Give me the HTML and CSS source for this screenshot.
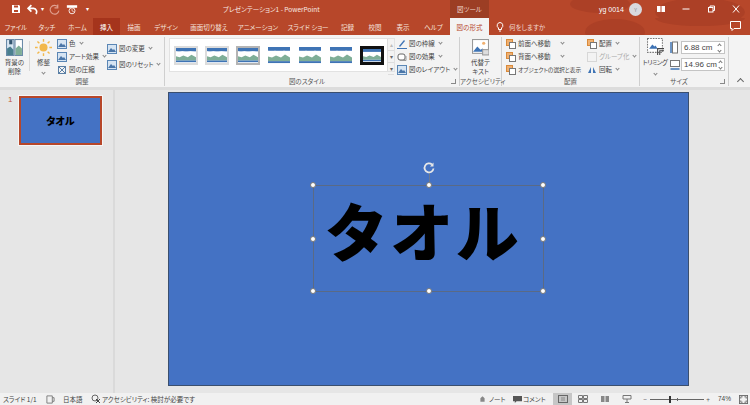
FILE: index.html
```html
<!DOCTYPE html>
<html lang="ja">
<head>
<meta charset="utf-8">
<title>PowerPoint</title>
<link rel="stylesheet" href="styles.css">
</head>
<body>
<svg class="defs" width="0" height="0">
  <symbol id="pic" viewBox="0 0 22 18" preserveAspectRatio="none">
    <rect width="22" height="18" fill="#fff"/>
    <rect width="22" height="4" fill="#3f74b5"/>
    <path d="M0 4l3 1 4-1 4 1 5-1 6 1v7l-5-3-4 2-5-2-4 2-4-1z" fill="#fff"/>
    <path d="M0 10l4 1 4-2 5 2 4-3 5 3v4H0z" fill="#7fae97"/>
    <rect y="15" width="22" height="2" fill="#3f74b5"/>
  </symbol>
  <symbol id="small" viewBox="0 0 10 10">
    <rect x=".5" y=".5" width="9" height="9" fill="#d6e4f2" stroke="#5a86b5"/>
    <path d="M1 8l3-4 2 2 1-1 2 3z" fill="#4a76a8"/>
  </symbol>
  <symbol id="stack" viewBox="0 0 10 10">
    <rect x=".5" y=".5" width="6" height="6" fill="#f0b070" stroke="#d98a3a"/>
    <rect x="3.500" y="3.500" width="6" height="6" fill="#fff" stroke="#777"/>
  </symbol>
</svg>

<div class="app">
  <header class="titlebar">
    <svg class="blobs" viewBox="0 0 750 18" preserveAspectRatio="none" aria-hidden="true">
      <ellipse cx="600" cy="4" rx="30" ry="9" fill="#ac4026"/>
      <ellipse cx="700" cy="12" rx="45" ry="14" fill="#ac4026"/>
    </svg>
    <div class="qat">
      <svg class="q save" viewBox="0 0 10 10"><path d="M1 1h7l1 1v7H1z" fill="#fff"/><rect x="3" y="1.500" width="4" height="2" fill="#b7472a"/><rect x="3" y="6" width="4" height="2" fill="#b7472a"/></svg>
      <svg class="q" viewBox="0 0 10 10"><path d="M4 1L1 4l3 3M1 4h5a3 3 0 0 1 2 5" fill="none" stroke="#fff" stroke-width="1.500"/></svg>
      <span class="qcaret">▾</span>
      <svg class="q dim" viewBox="0 0 10 10"><path d="M8 2.500A4 4 0 1 0 9 6M8 .5v3H5" fill="none" stroke="#e0a090" stroke-width="1"/></svg>
      <svg class="q wide" viewBox="0 0 14 12"><rect x="1" y="1" width="12" height="3" fill="#fff"/><circle cx="7" cy="7.500" r="3.500" fill="none" stroke="#fff"/><path d="M7 5.500v2l2 1" stroke="#fff" fill="none" stroke-width=".8"/></svg>
      <span class="qcaret small">▾</span>
    </div>
    <div class="doc-title">プレゼンテーション1 - PowerPoint</div>
    <div class="ctx">図ツール</div>
    <div class="account">
      <span class="user">yg 0014</span>
      <span class="avatar">Y</span>
      <svg class="win first" viewBox="0 0 10 8"><rect x="1" y="1" width="8" height="6" fill="#fff"/><rect x="4.500" y="1" width="1" height="6" fill="#b7472a"/></svg>
      <svg class="win" viewBox="0 0 10 8"><path d="M1.500 4h7" stroke="#fff"/></svg>
      <svg class="win" viewBox="0 0 10 8"><rect x="2.500" y="2.500" width="4.500" height="4.500" fill="none" stroke="#fff"/><path d="M4 2.500V1h4.500v4.500H7" fill="none" stroke="#fff"/></svg>
      <svg class="win" viewBox="0 0 10 8"><path d="M2 .5l6 7M8 .5l-6 7" stroke="#fff"/></svg>
    </div>
  </header>

  <nav class="tabs">
    <svg class="blobs" viewBox="0 0 750 17" preserveAspectRatio="none" aria-hidden="true">
      <ellipse cx="615" cy="14" rx="30" ry="13" fill="#ac4026"/>
      <ellipse cx="700" cy="0" rx="45" ry="8" fill="#ac4026"/>
    </svg>
    <span class="tab t1">ファイル</span>
    <span class="tab t2">タッチ</span>
    <span class="tab t3">ホーム</span>
    <span class="tab t4 on">挿入</span>
    <span class="tab t5">描画</span>
    <span class="tab t6">デザイン</span>
    <span class="tab t7">画面切り替え</span>
    <span class="tab t8">アニメーション</span>
    <span class="tab t9">スライド ショー</span>
    <span class="tab t10">記録</span>
    <span class="tab t11">校閲</span>
    <span class="tab t12">表示</span>
    <span class="tab t13">ヘルプ</span>
    <span class="tab t14 active">図の形式</span>
    <svg class="bulb" viewBox="0 0 8 10"><path d="M4 .5a3 3 0 0 0-1.500 5.500v1.500h3V6A3 3 0 0 0 4 .5zM3 9h2" fill="none" stroke="#fff"/></svg>
    <span class="tab tell">何をしますか</span>
    <svg class="comment" viewBox="0 0 11 10"><path d="M.5.500h10v7H4l-2 2v-2H.5z" fill="none" stroke="#fff"/></svg>
  </nav>

  <section class="ribbon">
    <div class="group g-adjust">
      <div class="gbody">
        <div class="bigbtn b-remove">
          <svg class="bigic" viewBox="0 0 16 16"><rect x=".5" y=".5" width="7" height="15" fill="#d8e6f2" stroke="#6a8aa8"/><rect x="8.500" y=".5" width="7" height="15" fill="#fff" stroke="#6a8aa8"/><path d="M1 15V9l3-2 3 3v5z" fill="#4a7f8f"/><path d="M9 15V9l3-3 3 3v6z" fill="#7fae97"/><path d="M3 1h3v4H3z" fill="#33556f"/></svg>
          <span>背景の<br>削除</span>
        </div>
        <i class="vsep"></i>
        <div class="bigbtn b-fix">
          <svg class="sun" viewBox="0 0 16 16"><circle cx="8" cy="8" r="3.800" fill="#f2b84b"/><g stroke="#f2b84b" stroke-width="1.300"><path d="M8 0v2.500M8 13.500V16M0 8h2.500M13.500 8H16M2.300 2.300l1.800 1.800M11.900 11.900l1.800 1.800M2.300 13.700l1.800-1.800M11.900 4.100l1.800-1.800"/></g></svg>
          <span>修整</span>
          <i class="caret"></i>
        </div>
        <div class="col c-color">
          <div class="row"><svg class="ic"><use href="#small"/></svg>色<i class="caret"></i></div>
          <div class="row"><svg class="ic"><use href="#small"/></svg>アート効果<i class="caret"></i></div>
          <div class="row"><svg class="ic" viewBox="0 0 10 10"><path d="M1 1l8 8M9 1L1 9" stroke="#5a7fa5"/><rect x="1.500" y="1.500" width="7" height="7" fill="none" stroke="#5a7fa5"/></svg>図の圧縮</div>
        </div>
        <div class="col c-change">
          <div class="row"><svg class="ic"><use href="#small"/></svg>図の変更<i class="caret"></i></div>
          <div class="row"><svg class="ic"><use href="#small"/></svg>図のリセット<i class="caret"></i></div>
        </div>
      </div>
      <div class="glabel">調整</div>
    </div>

    <div class="group g-style">
      <div class="gbody">
        <div class="gallery">
          <div class="thumbs">
            <svg class="thumb framed"><use href="#pic"/></svg>
            <svg class="thumb framed"><use href="#pic"/></svg>
            <svg class="thumb selected"><use href="#pic"/></svg>
            <svg class="thumb"><use href="#pic"/></svg>
            <svg class="thumb"><use href="#pic"/></svg>
            <svg class="thumb"><use href="#pic"/></svg>
            <svg class="thumb black"><use href="#pic"/></svg>
          </div>
          <div class="scroller"><span>▴</span><span>▾</span><span>▾</span></div>
        </div>
        <div class="col c-border">
          <div class="row"><svg class="ic" viewBox="0 0 10 10"><path d="M2 7l5-6 1 1-5 6z" fill="#3f74b5"/><path d="M0 9.500h10" stroke="#3f74b5"/></svg>図の枠線<i class="caret"></i></div>
          <div class="row"><svg class="ic" viewBox="0 0 10 10"><rect x="1" y="2" width="7" height="6" rx="2" fill="#fff" stroke="#666"/><path d="M3 8.500h6V4" fill="none" stroke="#999"/></svg>図の効果<i class="caret"></i></div>
          <div class="row"><svg class="ic"><use href="#small"/></svg>図のレイアウト<i class="caret"></i></div>
        </div>
      </div>
      <div class="glabel shifted">図のスタイル</div>
      <i class="launcher"></i>
    </div>

    <div class="group g-alt">
      <div class="gbody">
        <div class="bigbtn b-alt">
          <svg class="bigic" viewBox="0 0 16 16"><rect x=".5" y=".5" width="15" height="13" fill="#fff" stroke="#999"/><path d="M1 12l4-5 3 3 2-1 3 3z" fill="#3f74b5"/><circle cx="11" cy="4" r="1.500" fill="#f0b070"/><rect x="10" y="10" width="6" height="5" fill="#ddd" stroke="#999"/></svg>
          <span>代替テ<br>キスト</span>
        </div>
      </div>
      <div class="glabel">アクセシビリティ</div>
    </div>

    <div class="group g-arrange">
      <div class="gbody">
        <div class="col c-front">
          <div class="row"><svg class="ic"><use href="#stack"/></svg>前面へ移動<i class="caret wide"></i></div>
          <div class="row"><svg class="ic"><use href="#stack"/></svg>背面へ移動<i class="caret wide"></i></div>
          <div class="row narrow"><svg class="ic"><use href="#stack"/></svg>オブジェクトの選択と表示</div>
        </div>
        <div class="col c-align">
          <div class="row"><svg class="ic"><use href="#stack"/></svg>配置<i class="caret"></i></div>
          <div class="row off"><svg class="ic" viewBox="0 0 10 10"><rect x=".5" y=".5" width="9" height="9" fill="none" stroke="#bbb" stroke-dasharray="1 1"/></svg>グループ化<i class="caret"></i></div>
          <div class="row"><svg class="ic" viewBox="0 0 10 10"><path d="M1 8l3-6v6zM6 8V2l3 6z" fill="#3f74b5"/></svg>回転<i class="caret"></i></div>
        </div>
      </div>
      <div class="glabel">配置</div>
    </div>

    <div class="group g-size">
      <div class="gbody">
        <div class="bigbtn b-crop">
          <svg class="bigic" viewBox="0 0 16 16"><rect x=".5" y=".5" width="14" height="13" fill="#fff" stroke="#777" stroke-dasharray="1.500 1"/><path d="M2 10l3-4 2 2 1-1 2 3z" fill="#3f74b5"/><path d="M10 16v-6h6" fill="none" stroke="#444"/><path d="M12 16v-4h4" fill="none" stroke="#444"/></svg>
          <span class="crop-label">トリミング</span>
          <i class="caret"></i>
        </div>
        <div class="col c-dims">
          <div class="dim-row">
            <svg class="dim-ic" viewBox="0 0 10 12"><rect x="2.500" y=".5" width="5" height="11" fill="#fff" stroke="#777"/><path d="M1 .5v11" stroke="#3f74b5" stroke-width="1.500"/></svg>
            <div class="spin">6.88 cm<span class="arrows"><i class="up"></i><i class="dn"></i></span></div>
          </div>
          <div class="dim-row">
            <svg class="dim-ic" viewBox="0 0 10 12"><rect x=".5" y="2" width="9" height="6" fill="#fff" stroke="#777"/><path d="M.5 10.500h9" stroke="#3f74b5" stroke-width="1.500"/></svg>
            <div class="spin">14.96 cm<span class="arrows"><i class="up"></i><i class="dn"></i></span></div>
          </div>
        </div>
      </div>
      <div class="glabel shifted">サイズ</div>
      <i class="launcher"></i>
    </div>
    <i class="collapse"></i>
  </section>
  <div class="ribbon-gap"></div>

  <main class="main">
    <aside class="panel">
      <span class="num">1</span>
      <div class="mini"><span>タオル</span></div>
    </aside>
    <div class="stage">
      <div class="slide">
        <div class="selection">
          <span class="big-text">タオル</span>
          <i class="stem"></i>
          <svg class="rotate" viewBox="0 0 12 12"><path d="M10.500 6.500a4.500 4.500 0 1 1-1.500-4" fill="none" stroke="#e8e8e8" stroke-width="1.800"/><path d="M9.500 0v4h-3.500z" fill="#e8e8e8" transform="translate(1 .5)"/></svg>
          <i class="h tl"></i><i class="h tc"></i><i class="h tr"></i>
          <i class="h ml"></i><i class="h mr"></i>
          <i class="h bl"></i><i class="h bc"></i><i class="h br"></i>
        </div>
      </div>
    </div>
  </main>

  <footer class="status">
    <div class="st-left">
      <span class="s1">スライド 1/1</span>
      <svg class="s2" viewBox="0 0 10 10"><path d="M1 1h6v8H1zM7 3h2v4H7" fill="none" stroke="#777"/></svg>
      <span class="s3">日本語</span>
      <svg class="s4" viewBox="0 0 10 10"><circle cx="4" cy="4" r="3" fill="none" stroke="#666"/><path d="M5 5l4 4M9 5L5 9" stroke="#444"/></svg>
      <span>アクセシビリティ: 検討が必要です</span>
    </div>
    <div class="st-right">
      <svg class="s5" viewBox="0 0 10 10"><path d="M2 9V4l3-3 3 3v5z" fill="#888"/></svg>
      <span class="s6">ノート</span>
      <svg class="s7" viewBox="0 0 10 10"><path d="M0 1h10v6H4L2 9V7H0z" fill="#555"/></svg>
      <span class="s8">コメント</span>
      <span class="view on"><svg viewBox="0 0 10 8"><rect x=".5" y=".5" width="9" height="7" fill="none" stroke="#666"/><path d="M3 3h4M3 5h4" stroke="#888"/></svg></span>
      <span class="view"><svg viewBox="0 0 10 8"><path d="M.5.5h4v3h-4zM5.500.5h4v3h-4zM.5 4.500h4v3h-4zM5.500 4.500h4v3h-4z" fill="none" stroke="#777"/></svg></span>
      <span class="view"><svg viewBox="0 0 10 8"><path d="M1 1h3.500v6H1zM5.500 1H9v6H5.500z" fill="#888"/></svg></span>
      <span class="view"><svg viewBox="0 0 10 8"><path d="M1 .5h8v3.500H1zM5 4v3M3 7.500h4" fill="none" stroke="#777"/></svg></span>
      <span class="zm minus">−</span>
      <span class="slider"><i class="tick"></i><i class="thumbz"></i></span>
      <span class="zm plus">+</span>
      <span class="pct">74%</span>
      <svg class="fit" viewBox="0 0 10 10"><rect x=".5" y=".5" width="9" height="9" fill="none" stroke="#666"/><path d="M2 4V2h2M8 4V2H6M2 6v2h2M8 6v2H6" fill="none" stroke="#666"/></svg>
    </div>
  </footer>
</div>
</body>
</html>
```

FILE: styles.css
```css
* { box-sizing: border-box; }
html, body { margin: 0; padding: 0; }
body {
  width: 750px;
  height: 405px;
  overflow: hidden;
  font-family: "Noto Sans CJK JP", "Noto Sans", sans-serif;
  font-feature-settings: "palt";
  color: #444;
}
.defs { position: absolute; }
.app { width: 750px; height: 405px; display: flex; flex-direction: column; background: #e6e6e6; }

/* title bar */
.titlebar {
  position: relative;
  height: 18px;
  background: #b7472a;
  color: #fff;
  display: flex;
  align-items: center;
  font-size: 7px;
  flex: none;
}
.blobs { position: absolute; inset: 0; width: 100%; height: 100%; }
.qat { position: relative; display: flex; align-items: center; width: 222px; padding-left: 11px; }
.q { width: 11px; height: 11px; margin-right: 6px; }
.q.save { width: 10px; height: 10px; margin-right: 6px; }
.q.dim { margin-left: 5px; margin-right: 6px; }
.q.wide { width: 12px; height: 11px; margin-right: 8px; }
.qcaret { font-size: 6px; line-height: 1; margin-left: -3px; }
.qcaret.small { margin-left: 0; }
.doc-title { position: relative; width: 228px; white-space: nowrap; padding-left: 1px; font-size: 6.500px; color: #f8e8e2; }
.ctx {
  position: relative;
  width: 39px;
  height: 18px;
  background: #9c3e24;
  text-align: center;
  line-height: 18px;
  font-size: 6.500px;
  color: #f0d8d0;
}
.account { position: relative; display: flex; align-items: center; flex: 1; padding-left: 110px; }
.user { font-size: 7px; width: 30px; white-space: nowrap; font-family: "Liberation Sans", sans-serif; }
.avatar {
  width: 13px; height: 13px;
  border-radius: 50%;
  background: #d9d9de; color: #8a8a90;
  font-size: 5px; line-height: 13px; text-align: center;
}
.win { width: 10px; height: 8px; margin-left: 15px; }
.win.first { margin-left: 14px; }

/* tabs */
.tabs {
  position: relative;
  height: 17px;
  flex: none;
  background: #b7472a;
  color: #f6e4de;
  display: flex;
  align-items: stretch;
  font-size: 6.500px;
}
.tab { position: relative; display: flex; align-items: center; justify-content: center; white-space: nowrap; }
.t1 { width: 32px; }
.t2 { width: 30px; }
.t3 { width: 31px; }
.t4 { width: 27px; }
.t4.on { background: #a5341c; color: #fff; }
.t5 { width: 28px; }
.t6 { width: 36px; }
.t7 { width: 50px; }
.t8 { width: 48px; }
.t9 { width: 52px; }
.t10 { width: 27px; }
.t11 { width: 28px; }
.t12 { width: 28px; }
.t13 { width: 33px; }
.t14 { width: 39px; }
.tab.active { background: #f3f3f3; color: #b7472a; }
.bulb { position: relative; width: 8px; height: 10px; margin: 4px 0 0 7px; }
.tell { margin-left: 5px; color: #f2d8d0; }
.comment { position: absolute; right: 9px; top: 3px; width: 11px; height: 10px; }

/* ribbon */
.ribbon {
  position: relative;
  height: 52px;
  flex: none;
  background: #f3f3f3;
  display: flex;
  font-size: 6.500px;
  line-height: 9px;
}
.ribbon-gap { height: 3px; flex: none; background: #dcdcdc; }
.group { position: relative; display: flex; flex-direction: column; border-right: 1px solid #cfcfcf; margin: 2px 0 1px; flex: none; }
.gbody { flex: 1; display: flex; min-height: 0; }
.glabel { height: 10px; line-height: 10px; font-size: 6.500px; text-align: center; color: #555; white-space: nowrap; }
.glabel.shifted { padding-right: 10px; }
.launcher { position: absolute; right: 3px; bottom: 2px; width: 5px; height: 5px; border-right: 1px solid #888; border-bottom: 1px solid #888; }
.g-adjust { width: 165px; }
.g-style { width: 295px; }
.g-alt { width: 42px; }
.g-arrange { width: 138px; }
.g-size { width: 89px; }
.bigbtn { display: flex; flex-direction: column; align-items: center; text-align: center; white-space: nowrap; }
.bigic { width: 17px; height: 17px; display: block; }
.sun { width: 17px; height: 17px; display: block; }
.bigbtn span { display: block; }
.caret {
  display: inline-block;
  width: 3px;
  height: 3px;
  margin: -2px 0 0 4px;
  border-right: 1px solid #888;
  border-bottom: 1px solid #888;
  transform: rotate(45deg);
  flex: none;
}
.bigbtn .caret { margin: 2px 0 0; }
.caret.wide { margin-left: 10px; }
.vsep { width: 1px; height: 30px; margin: 4px 0 0; background: #d8d8d8; flex: none; }
.b-remove { width: 29px; padding-top: 2px; gap: 2px; }
.b-fix { width: 27px; padding-top: 2px; gap: 2px; }
.col { display: flex; flex-direction: column; }
.row { display: flex; align-items: center; height: 13px; white-space: nowrap; }
.row.off { color: #aaa; }
.row.narrow { font-size: 5.700px; }
.ic { width: 10px; height: 10px; margin-right: 2px; flex: none; }
.c-color { width: 50px; }
.c-change { padding-top: 5px; gap: 3px; }

.gallery {
  display: flex;
  margin: 1px 0 0 4px;
  width: 226px;
  height: 34px;
  background: #fff;
  border: 1px solid #e2e2e2;
}
.thumbs { display: flex; align-items: center; flex: 1; padding-left: 5px; gap: 9px; }
.thumb { width: 22px; height: 17px; flex: none; }
.thumb.framed { width: 20px; height: 15px; margin: 0 1px; outline: 2px solid #dcdcdc; }
.thumb.selected { width: 20px; height: 15px; margin: 0 1px; outline: 2px solid #b4b4b4; }
.thumb.black { outline: 3px solid #111; width: 18px; height: 13px; margin-left: 2px; }
.scroller { width: 7px; display: flex; flex-direction: column; background: #f3f3f3; border-left: 1px solid #ddd; }
.scroller span { flex: 1; font-size: 6px; line-height: 11px; text-align: center; color: #666; border-bottom: 1px solid #ddd; }
.scroller span:first-child { color: #bbb; }
.c-border { padding: 0 0 0 2px; }

.b-alt { width: 41px; padding-top: 2px; gap: 2px; }

.c-front { width: 85px; padding-left: 4px; }

.b-crop { width: 30px; padding-top: 1px; gap: 3px; }
.crop-label { letter-spacing: -.6px; }
.c-dims { gap: 4px; padding-top: 4px; }
.dim-row { display: flex; align-items: center; gap: 1px; }
.dim-ic { width: 10px; height: 13px; flex: none; }
.spin {
  width: 44px;
  height: 13px;
  background: #fff;
  border: 1px solid #c4c4c4;
  font-family: "Liberation Sans", sans-serif;
  font-size: 8px;
  line-height: 11px;
  padding-left: 2px;
  display: flex;
  justify-content: space-between;
  white-space: nowrap;
}
.arrows { display: flex; flex-direction: column; align-items: center; justify-content: center; gap: 2px; width: 9px; }
.arrows i { display: block; width: 3px; height: 3px; border-right: 1px solid #777; border-bottom: 1px solid #777; }
.arrows .up { transform: rotate(-135deg); }
.arrows .dn { transform: rotate(45deg); }
.collapse { position: absolute; right: 7px; bottom: 3px; width: 5px; height: 5px; border-right: 1px solid #666; border-bottom: 1px solid #666; transform: rotate(-135deg); }

/* main */
.main { flex: 1; display: flex; min-height: 0; background: #e6e6e6; }
.panel {
  position: relative;
  width: 115px;
  flex: none;
  border-right: 2px solid #dadada;
  padding: 6px 0 0 19px;
}
.num { position: absolute; left: 8px; top: 5px; font-size: 8px; line-height: 10px; color: #c0563a; font-family: "Liberation Sans", sans-serif; }
.mini {
  width: 83px;
  height: 49px;
  background: #4472c4;
  border: 2px solid #b7472a;
  outline: 1px solid #f5f5f5;
  display: flex;
  align-items: center;
  justify-content: center;
  font-size: 10px;
  font-weight: 900;
  color: #000;
}
.stage { flex: 1; padding: 2px 0 0 53px; }
.slide {
  width: 521px;
  height: 294px;
  background: #4472c4;
  border: 1px solid #3b4f6e;
  display: flex;
  align-items: center;
  justify-content: center;
}
.selection {
  position: relative;
  width: 231px;
  height: 107px;
  margin-bottom: 1px;
  padding: 0 11px 20px 0;
  border: 1px solid #5a6a85;
  display: flex;
  align-items: center;
  justify-content: center;
}
.big-text { font-size: 63px; font-feature-settings: normal; line-height: 1; font-weight: 900; color: #000; white-space: nowrap; letter-spacing: 2.500px; }
.h {
  position: absolute;
  width: 6px;
  height: 6px;
  background: #fff;
  border: 1px solid #777;
  border-radius: 50%;
}
.tl { left: -4px; top: -4px; }
.tc { left: calc(50% - 3px); top: -4px; }
.tr { right: -3px; top: -4px; }
.ml { left: -4px; top: calc(50% - 3px); }
.mr { right: -3px; top: calc(50% - 3px); }
.bl { left: -4px; bottom: -3px; }
.bc { left: calc(50% - 3px); bottom: -3px; }
.br { right: -3px; bottom: -3px; }
.stem { position: absolute; left: 50%; top: -14px; width: 1px; height: 14px; background: #6b7a92; }
.rotate { position: absolute; left: calc(50% - 6px); top: -24px; width: 12px; height: 12px; }

/* status */
.status {
  height: 12px;
  flex: none;
  background: #f1f1f1;
  display: flex;
  justify-content: space-between;
  align-items: center;
  font-size: 6.500px;
  line-height: 12px;
  color: #444;
  white-space: nowrap;
}
.st-left { display: flex; align-items: center; padding-left: 3px; }
.s1 { width: 43px; }
.s2 { width: 9px; height: 9px; margin-right: 8px; }
.s3 { width: 28px; }
.s4 { width: 10px; height: 10px; margin-right: 1px; }
.st-right { display: flex; align-items: center; height: 12px; }
.s5 { width: 7px; height: 8px; margin-right: 3px; }
.s6 { width: 24px; }
.s7 { width: 9px; height: 9px; margin-right: 1px; }
.s8 { width: 30px; }
.view { width: 22px; height: 12px; display: flex; align-items: center; justify-content: center; }
.view svg { width: 10px; height: 8px; }
.view.on { width: 19px; background: #c6c6c6; }
.zm { width: 6px; text-align: center; color: #555; }
.minus { margin-left: 4px; }
.plus { margin-left: 1px; }
.slider { position: relative; width: 54px; height: 1px; margin-left: 2px; background: #666; }
.tick { position: absolute; left: 27px; top: -1px; width: 1px; height: 3px; background: #666; }
.thumbz { position: absolute; left: 19px; top: -3px; width: 2px; height: 7px; background: #333; }
.pct { width: 18px; margin-left: 7px; font-family: "Liberation Sans", sans-serif; }
.fit { width: 9px; height: 9px; margin: 0 2px 0 3px; }
```
